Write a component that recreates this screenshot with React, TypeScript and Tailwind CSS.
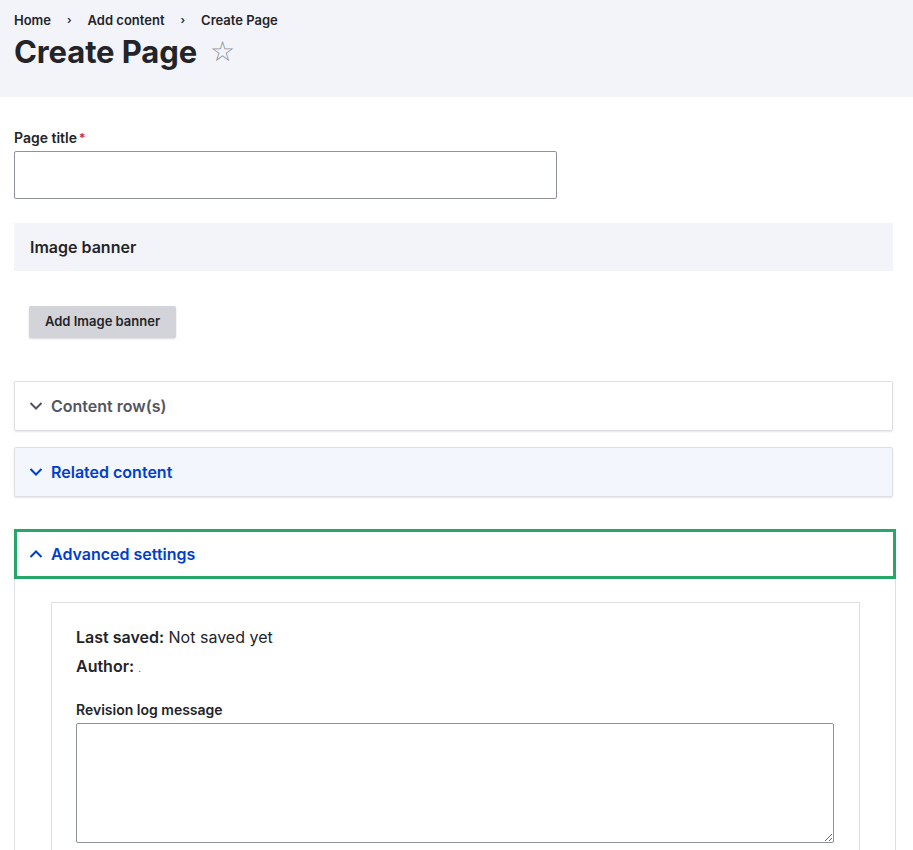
import React from "react";

const Chevron = ({ up = false, className = "" }: { up?: boolean; className?: string }) => (
  <svg width="14" height="14" viewBox="0 0 14 14" className={className} fill="none">
    {up ? (
      <path d="M1.5 10 L7 4.5 L12.5 10" stroke="currentColor" strokeWidth="2" />
    ) : (
      <path d="M1.5 4 L7 9.5 L12.5 4" stroke="currentColor" strokeWidth="2" />
    )}
  </svg>
);

export default function App() {
  return (
    <div className="min-h-[850px] bg-white text-[#232429]" style={{ fontFamily: "Inter, 'Noto Sans', sans-serif" }}>
      <div className="bg-[#f3f4f9] h-[97px] px-[14px] pt-[12px]">
        <nav className="flex items-center text-[13px] font-semibold leading-[16px] text-[#232429]">
          <span>Home</span>
          <span className="mx-[16px] text-[11px]">›</span>
          <span>Add content</span>
          <span className="mx-[16px] text-[11px]">›</span>
          <span>Create Page</span>
        </nav>
        <div className="flex items-center mt-[4px]">
          <h1 className="text-[31px] font-bold leading-[40px] tracking-[-0.1px]">Create Page</h1>
          <span className="ml-[13px] text-[28px] leading-[40px] text-[#8e929c] font-light" style={{ fontFamily: "'DejaVu Sans', sans-serif" }}>☆</span>
        </div>
      </div>

      <div className="px-[14px] pr-[20px]">
        <div className="mt-[32px]">
          <label className="flex items-center text-[14px] font-semibold leading-[18px]">
            Page title<span className="text-[#dc2323] ml-[2px] text-[12px]">*</span>
          </label>
          <div className="mt-[4px] w-[543px] h-[48px] border border-[#8e929c] rounded-[2px] bg-white" />
        </div>

        <div className="mt-[24px] h-[48px] bg-[#f3f4f9] flex items-center px-[16px] text-[16px] font-semibold">
          Image banner
        </div>

        <div className="mt-[35px] ml-[15px]">
          <button className="h-[32px] px-[16px] bg-[#d3d4d9] rounded-[2px] text-[13px] font-semibold text-[#232429] shadow-[0_1px_2px_rgba(0,0,0,0.15)]">
            Add Image banner
          </button>
        </div>

        <div className="mt-[43px] h-[50px] border border-[#dedfe4] rounded-[2px] shadow-[0_1px_2px_rgba(0,0,0,0.1)] flex items-center pl-[14px] text-[#545560] bg-white">
          <Chevron className="text-[#545560]" />
          <span className="ml-[8px] text-[16px] font-semibold">Content row(s)</span>
        </div>

        <div className="mt-[16px] h-[50px] border border-[#dedfe4] rounded-[2px] shadow-[0_1px_2px_rgba(0,0,0,0.1)] flex items-center pl-[14px] text-[#003ecc] bg-[#f3f6fd]">
          <Chevron />
          <span className="ml-[8px] text-[16px] font-semibold">Related content</span>
        </div>

        <div className="mt-[32px] mr-[-3px] border-l border-r border-[#dedfe4] h-[322px]">
          <div className="h-[50px] border-[3px] border-[#26a769] -mx-px flex items-center pl-[12px] text-[#003ecc]">
            <Chevron up />
            <span className="ml-[8px] text-[16px] font-semibold">Advanced settings</span>
          </div>
          <div className="mx-[36px] mr-[35px] mt-[23px] border border-[#dedfe4] h-[260px] px-[24px] pt-[24px]">
            <div className="text-[16px] leading-[20px]">
              <span className="font-semibold">Last saved:</span> Not saved yet
            </div>
            <div className="text-[16px] leading-[20px] mt-[9px]">
              <span className="font-semibold">Author:</span> <span className="text-[8px]">.</span>
            </div>
            <div className="mt-[22px] text-[14px] font-semibold leading-[18px]">Revision log message</div>
            <textarea className="block mt-[4px] w-[758px] h-[120px] border border-[#8e929c] rounded-[2px] resize-y" />
          </div>
        </div>
      </div>
    </div>
  );
}
